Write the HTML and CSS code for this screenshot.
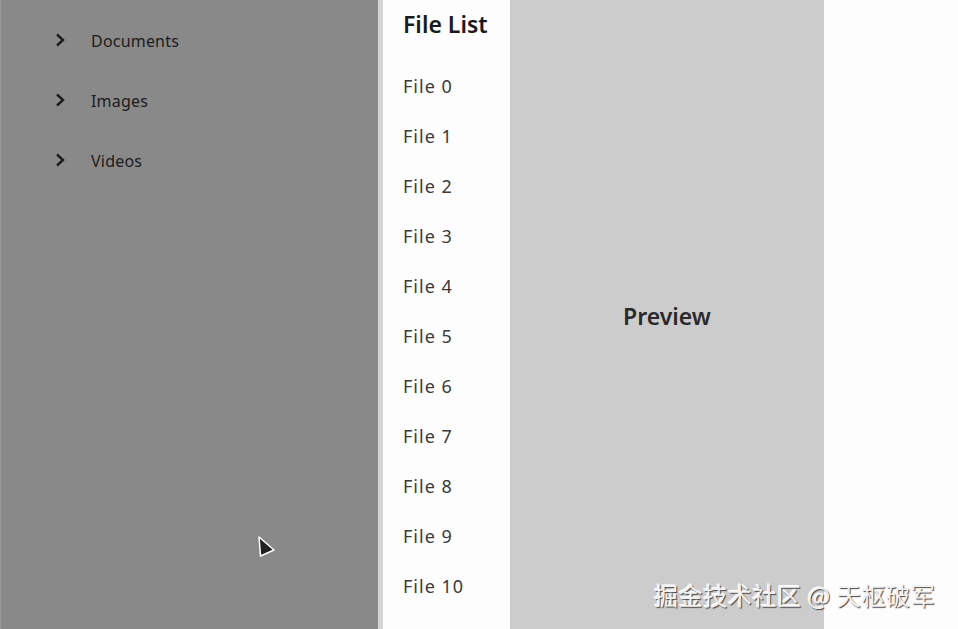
FILE: index.html
```html
<!DOCTYPE html>
<html>
<head>
<meta charset="utf-8">
<link rel="stylesheet" href="styles.css">
</head>
<body>
<div class="app">
  <nav class="nav">
    <div class="tree-item">
      <svg class="chev" width="12" height="14" viewBox="0 0 12 14"><path d="M3 1.5 L9 7 L3 12.5" fill="none" stroke="#1c1c1c" stroke-width="2.4" stroke-linejoin="miter"/></svg>
      <span class="tree-label">Documents</span>
    </div>
    <div class="tree-item">
      <svg class="chev" width="12" height="14" viewBox="0 0 12 14"><path d="M3 1.5 L9 7 L3 12.5" fill="none" stroke="#1c1c1c" stroke-width="2.4" stroke-linejoin="miter"/></svg>
      <span class="tree-label">Images</span>
    </div>
    <div class="tree-item">
      <svg class="chev" width="12" height="14" viewBox="0 0 12 14"><path d="M3 1.5 L9 7 L3 12.5" fill="none" stroke="#1c1c1c" stroke-width="2.4" stroke-linejoin="miter"/></svg>
      <span class="tree-label">Videos</span>
    </div>
  </nav>
  <div class="splitter"></div>
  <section class="list">
    <h1 class="list-title">File List</h1>
    <div class="file">File 0</div>
    <div class="file">File 1</div>
    <div class="file">File 2</div>
    <div class="file">File 3</div>
    <div class="file">File 4</div>
    <div class="file">File 5</div>
    <div class="file">File 6</div>
    <div class="file">File 7</div>
    <div class="file">File 8</div>
    <div class="file">File 9</div>
    <div class="file">File 10</div>
  </section>
  <section class="preview">Preview</section>
  <div class="rest"></div>
</div>
<svg class="cursor" width="22" height="26" viewBox="0 0 22 26"><path d="M2 2 L3.5 21 L17 15 Z" fill="#1f1f1f" stroke="#fff" stroke-width="1.5" stroke-linejoin="round"/></svg>
<div class="watermark">掘金技术社区 @ 天枢破军</div>
</body>
</html>
```
FILE: styles.css
```css
html, body {
  margin: 0;
  padding: 0;
  width: 958px;
  height: 629px;
  overflow: hidden;
  font-family: "Noto Sans", "Open Sans", sans-serif;
}
.app {
  display: flex;
  height: 629px;
}
.nav {
  width: 378px;
  flex: none;
  background: #898989;
  padding-top: 11px;
  box-sizing: border-box;
  border-left: 1px solid #9a9a9a;
}
.tree-item {
  height: 60px;
  display: flex;
  align-items: center;
  padding-left: 53px;
}
.chev {
  display: block;
  margin-top: -3px;
}
.tree-label {
  margin-left: 25px;
  font-size: 16px;
  letter-spacing: 0.2px;
  color: #1c1c1c;
}
.splitter {
  width: 5px;
  flex: none;
  background: #d4d4d4;
}
.list {
  width: 127px;
  flex: none;
  background: #fdfdfd;
  padding-left: 20px;
  box-sizing: border-box;
}
.list-title {
  margin: 0;
  height: 61px;
  padding-top: 8px;
  box-sizing: border-box;
  font-size: 23px;
  font-weight: 600;
  color: #1b1b1b;
  line-height: 32px;
}
.file {
  height: 50px;
  line-height: 50px;
  font-size: 18px;
  letter-spacing: 1px;
  color: #3a3a3a;
}
.preview {
  width: 314px;
  flex: none;
  background: #cccccc;
  display: flex;
  align-items: center;
  justify-content: center;
  font-size: 23px;
  font-weight: 600;
  color: #2a2a2a;
  padding-top: 3px;
  box-sizing: border-box;
}
.rest {
  flex: 1;
  background: #fdfdfd;
}
.cursor {
  position: absolute;
  left: 257px;
  top: 535px;
}
.watermark {
  position: absolute;
  left: 654px;
  top: 580px;
  font-family: "Noto Sans CJK SC", sans-serif;
  font-size: 24px;
  color: #f2f2f2;
  letter-spacing: 0.6px;
  text-shadow: 1px 1px 1px #444, -1px -1px 0 #fff;
  line-height: 30px;
  white-space: nowrap;
}
```
